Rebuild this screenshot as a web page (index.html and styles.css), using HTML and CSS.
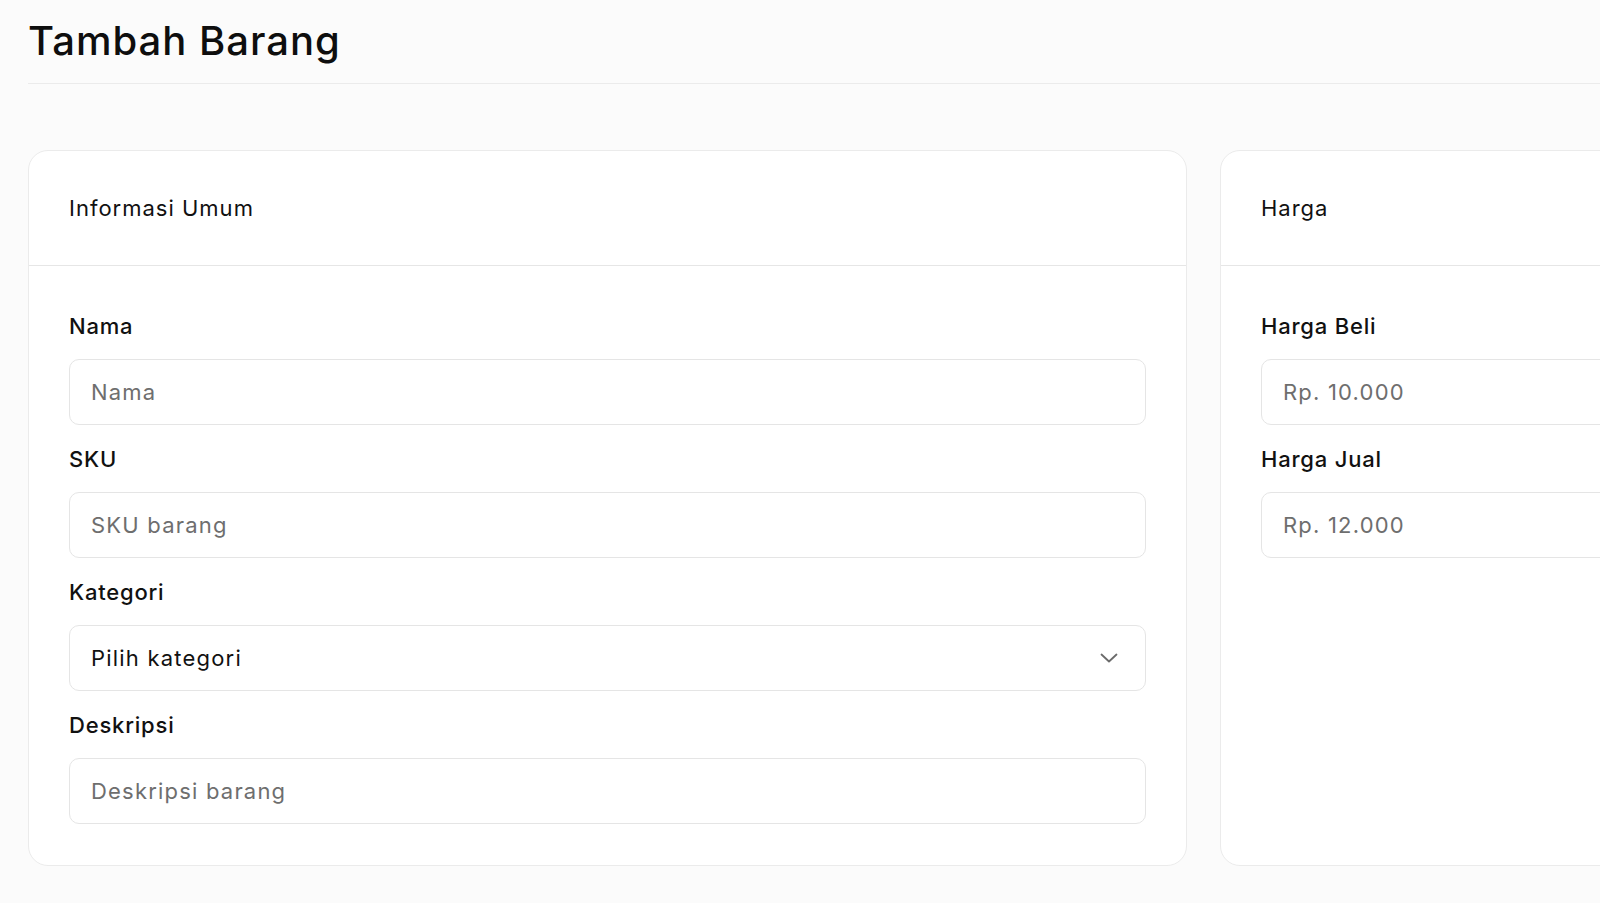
FILE: index.html
```html
<!DOCTYPE html>
<html lang="id">
<head>
<meta charset="utf-8">
<title>Tambah Barang</title>
<link rel="stylesheet" href="styles.css">
</head>
<body>
<div class="page">
  <header class="page-header">
    <h1 class="page-title">Tambah Barang</h1>
  </header>
  <div class="grid">
    <section class="card card-main">
      <div class="card-header"><h2 class="card-title">Informasi Umum</h2></div>
      <div class="card-body">
        <div class="field">
          <label class="label">Nama</label>
          <div class="input"><span class="placeholder">Nama</span></div>
        </div>
        <div class="field">
          <label class="label">SKU</label>
          <div class="input"><span class="placeholder">SKU barang</span></div>
        </div>
        <div class="field">
          <label class="label">Kategori</label>
          <div class="input select"><span class="value">Pilih kategori</span>
            <svg class="chevron" width="18" height="10" viewBox="0 0 18 10"><path d="M1.5 1.5 L9 8.5 L16.5 1.5" fill="none" stroke="#6b6b6b" stroke-width="1.8" stroke-linecap="round" stroke-linejoin="round"/></svg>
          </div>
        </div>
        <div class="field">
          <label class="label">Deskripsi</label>
          <div class="input"><span class="placeholder">Deskripsi barang</span></div>
        </div>
      </div>
    </section>
    <section class="card card-side">
      <div class="card-header"><h2 class="card-title">Harga</h2></div>
      <div class="card-body">
        <div class="field">
          <label class="label">Harga Beli</label>
          <div class="input"><span class="placeholder">Rp. 10.000</span></div>
        </div>
        <div class="field">
          <label class="label">Harga Jual</label>
          <div class="input"><span class="placeholder">Rp. 12.000</span></div>
        </div>
      </div>
    </section>
  </div>
</div>
</body>
</html>
```
FILE: styles.css
```css
html, body {
  margin: 0;
  padding: 0;
  background: #fbfbfb;
  overflow: hidden;
}
body {
  font-family: Inter, "Noto Sans", sans-serif;
  color: #111;
}
.page {
  padding-left: 28px;
  width: 2200px;
}
.page-header {
  padding: 11px 0 12px;
  border-bottom: 1px solid #ebebeb;
}
.page-title {
  margin: 0;
  font-size: 40px;
  line-height: 60px;
  font-weight: 500;
  letter-spacing: 1px;
  color: #0e0e0e;
}
.grid {
  display: flex;
  gap: 33px;
  margin-top: 66px;
  align-items: stretch;
}
.card {
  background: #fff;
  border: 1px solid #ebebeb;
  border-radius: 20px;
  box-sizing: border-box;
}
.card-main { width: 1159px; }
.card-side { width: 700px; }
.card-header {
  height: 114px;
  display: flex;
  align-items: center;
  padding: 0 40px;
  border-bottom: 1px solid #e6e6e6;
}
.card-title {
  margin: 0;
  font-size: 22px;
  font-weight: 400;
  letter-spacing: 1px;
  color: #111;
}
.card-body {
  padding: 44px 40px 41px;
  display: flex;
  flex-direction: column;
  gap: 18px;
}
.field {
  display: flex;
  flex-direction: column;
  gap: 16px;
}
.label {
  font-size: 22px;
  line-height: 33px;
  font-weight: 500;
  letter-spacing: 0.8px;
  color: #111;
}
.input {
  height: 66px;
  box-sizing: border-box;
  border: 1px solid #e5e5e5;
  border-radius: 10px;
  background: #fff;
  display: flex;
  align-items: center;
  padding: 0 27px 0 21px;
  font-size: 22px;
  letter-spacing: 1.2px;
}
.placeholder { color: #6e6e6e; }
.value { color: #111; }
.select { justify-content: space-between; }
.chevron { display: block; }
```
